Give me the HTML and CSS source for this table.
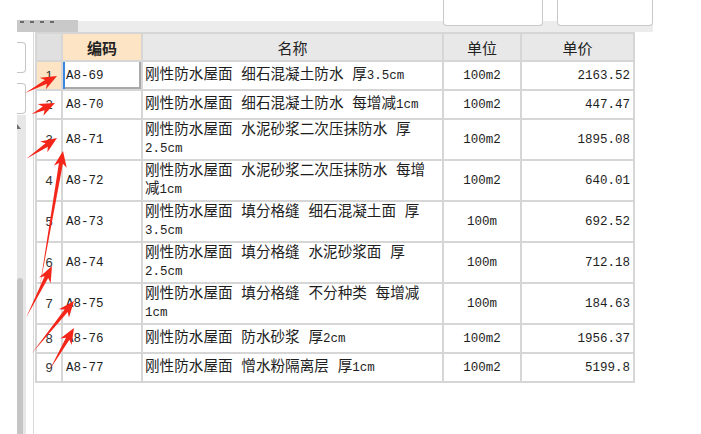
FILE: index.html
```html
<!DOCTYPE html>
<html lang="zh-CN">
<head>
<meta charset="utf-8">
<title>定额列表</title>
<link rel="stylesheet" href="styles.css">
</head>
<body>
<div class="page">
  <div class="topbar">
    <div class="tab"><i></i><i></i><i></i><i></i></div>
    <div></div>
    <div class="field"></div>
    <div></div>
    <div class="field"></div>
  </div>
  <div class="main">
    <div class="side">
      <div class="sbox"></div>
      <div class="sbox"></div>
      <div class="track"><span class="tri"></span><div class="thumb"></div></div>
    </div>
    <div class="gridwrap">
      <table class="grid">
        <colgroup>
          <col class="c-num"><col class="c-code"><col class="c-name"><col class="c-unit"><col class="c-price">
        </colgroup>
        <thead>
          <tr><th class="corner"></th><th class="hl">编码</th><th>名称</th><th>单位</th><th>单价</th></tr>
        </thead>
        <tbody>
          <tr class="one"><td class="num sel">1</td><td class="code editing">A8-69</td><td class="name">刚性防水屋面 细石混凝土防水 厚<span class="en">3.5cm</span></td><td class="unit">100m2</td><td class="price">2163.52</td></tr>
          <tr class="one"><td class="num">2</td><td class="code">A8-70</td><td class="name">刚性防水屋面 细石混凝土防水 每增减<span class="en">1cm</span></td><td class="unit">100m2</td><td class="price">447.47</td></tr>
          <tr class="two"><td class="num">3</td><td class="code">A8-71</td><td class="name">刚性防水屋面 水泥砂浆二次压抹防水 厚<span class="en">2.5cm</span></td><td class="unit">100m2</td><td class="price">1895.08</td></tr>
          <tr class="two"><td class="num">4</td><td class="code">A8-72</td><td class="name">刚性防水屋面 水泥砂浆二次压抹防水 每增减<span class="en">1cm</span></td><td class="unit">100m2</td><td class="price">640.01</td></tr>
          <tr class="two"><td class="num">5</td><td class="code">A8-73</td><td class="name">刚性防水屋面 填分格缝 细石混凝土面 厚<span class="en">3.5cm</span></td><td class="unit">100m</td><td class="price">692.52</td></tr>
          <tr class="two"><td class="num">6</td><td class="code">A8-74</td><td class="name">刚性防水屋面 填分格缝 水泥砂浆面 厚<span class="en">2.5cm</span></td><td class="unit">100m</td><td class="price">712.18</td></tr>
          <tr class="two"><td class="num">7</td><td class="code">A8-75</td><td class="name">刚性防水屋面 填分格缝 不分种类 每增减<span class="en">1cm</span></td><td class="unit">100m</td><td class="price">184.63</td></tr>
          <tr class="one"><td class="num">8</td><td class="code">A8-76</td><td class="name">刚性防水屋面 防水砂浆 厚<span class="en">2cm</span></td><td class="unit">100m2</td><td class="price">1956.37</td></tr>
          <tr class="one"><td class="num">9</td><td class="code">A8-77</td><td class="name">刚性防水屋面 憎水粉隔离层 厚<span class="en">1cm</span></td><td class="unit">100m2</td><td class="price">5199.8</td></tr>
        </tbody>
      </table>
    </div>
  </div>
  <svg class="arrows" width="701" height="434" viewBox="0 0 701 434">
    <g fill="#f4261a">
      <polygon transform="translate(57 76) rotate(-28)" points="0,0 -16,-6.5 -12.5,-2 -36,0 -12.5,2 -16,6.5"/>
      <polygon transform="translate(55 103) rotate(-25.6)" points="0,0 -16,-6.5 -12.5,-2 -26,0 -12.5,2 -16,6.5"/>
      <polygon transform="translate(57 138) rotate(-34.1)" points="0,0 -16,-6.5 -12.5,-2 -37,0 -12.5,2 -16,6.5"/>
      <polygon transform="translate(63 151) rotate(-80.3)" points="0,0 -16,-6.5 -12.5,-2 -138,0 -12.5,2 -16,6.5"/>
      <polygon transform="translate(52 266) rotate(-63.4)" points="0,0 -16,-6.5 -12.5,-2 -58,0 -12.5,2 -16,6.5"/>
      <polygon transform="translate(74 301) rotate(-51.1)" points="0,0 -16,-6.5 -12.5,-2 -67,0 -12.5,2 -16,6.5"/>
      <polygon transform="translate(74 328) rotate(-59.7)" points="0,0 -16,-6.5 -12.5,-2 -48,0 -12.5,2 -16,6.5"/>
    </g>
  </svg>
</div>
</body>
</html>
```
FILE: styles.css
```css
* { box-sizing: border-box; }
html, body { margin: 0; padding: 0; }
body {
  width: 701px;
  height: 434px;
  overflow: hidden;
  background: #fff;
  color: #1e1e1e;
  font-family: "Noto Sans CJK SC", sans-serif;
}
.page { position: relative; width: 701px; height: 434px; }

/* top strip */
.topbar {
  display: grid;
  grid-template-columns: 61px 365px 100px 14px 96px;
  width: 636px;
  height: 32px;
  margin-left: 17px;
  background: linear-gradient(#fff 0 21px, #ececec 21px 32px);
}
.tab {
  align-self: end;
  height: 12px;
  background: #c9c9c9;
  display: flex;
  gap: 6px;
  padding-left: 3px;
}
.tab i {
  display: block;
  width: 4px;
  height: 2px;
  margin-top: 1px;
  background: #6a6a6a;
}
.field {
  align-self: start;
  height: 26px;
  background: #fff;
  border: 1px solid #c8c8c8;
  border-top: 0;
  border-radius: 0 0 4px 4px;
}

/* body */
.main { display: flex; height: 402px; }
.side { display: flex; flex-direction: column; width: 9px; margin-left: 17px; }
.sbox {
  height: 31px;
  margin-top: 10px;
  background: #fff;
  border: 1px solid #c6c6c6;
  border-left: 0;
  border-radius: 0 4px 4px 0;
}
.track {
  flex: 1;
  margin-top: 1px;
  background: #e7e7e7;
  display: flex;
  flex-direction: column;
}
.tri {
  width: 0;
  height: 0;
  margin-top: 9px;
  border-bottom: 5px solid #6e6e6e;
  border-right: 4px solid transparent;
}
.thumb {
  margin-top: auto;
  width: 6px;
  height: 156px;
  background: #c5c5c5;
  border-radius: 3px 3px 0 0;
}
.gridwrap {
  flex: 1;
  margin-left: 7px;
  border-left: 1px solid #d9d9d9;
  padding-left: 1px;
}

/* table */
.grid {
  border-collapse: collapse;
  table-layout: fixed;
  width: 598px;
  font-family: "Liberation Mono", "Noto Sans CJK SC", monospace;
  font-size: 12.5px;
  color: #1e1e1e;
}
.c-num { width: 26px; }
.c-code { width: 80px; }
.c-name { width: 301px; }
.c-unit { width: 78px; }
.c-price { width: 113px; }
.grid th, .grid td {
  border: 2px solid #d6d6d6;
  padding: 0 3px;
  vertical-align: middle;
}
.grid th {
  height: 28px;
  background: #e8e8e8;
  font-family: "Noto Sans CJK SC", sans-serif;
  font-size: 15px;
  font-weight: normal;
  color: #222;
  text-align: center;
}
.grid th.corner { background: #e0e0e0; }
.grid th.hl { background: #fde4c5; font-weight: bold; }
.one td { height: 29px; }
.two td { height: 41px; }
.num {
  text-align: center;
  font-family: "Liberation Sans", sans-serif;
  font-size: 13px;
  color: #333;
}
.grid td.num { padding: 0; }
.sel { background: #fde4c5; }
.code { text-align: left; }
.editing { box-shadow: inset 2px 0 0 #3a86e0, inset -2px -2px 0 #a9a9a9; }
.grid td.name {
  font-size: 14.6px;
  line-height: 18px;
  padding: 0 11px 0 2px;
}
.name .en { font-size: 12.5px; }
.unit { text-align: center; }
.price { text-align: right; }

.arrows { position: absolute; left: 0; top: 0; pointer-events: none; }
```
